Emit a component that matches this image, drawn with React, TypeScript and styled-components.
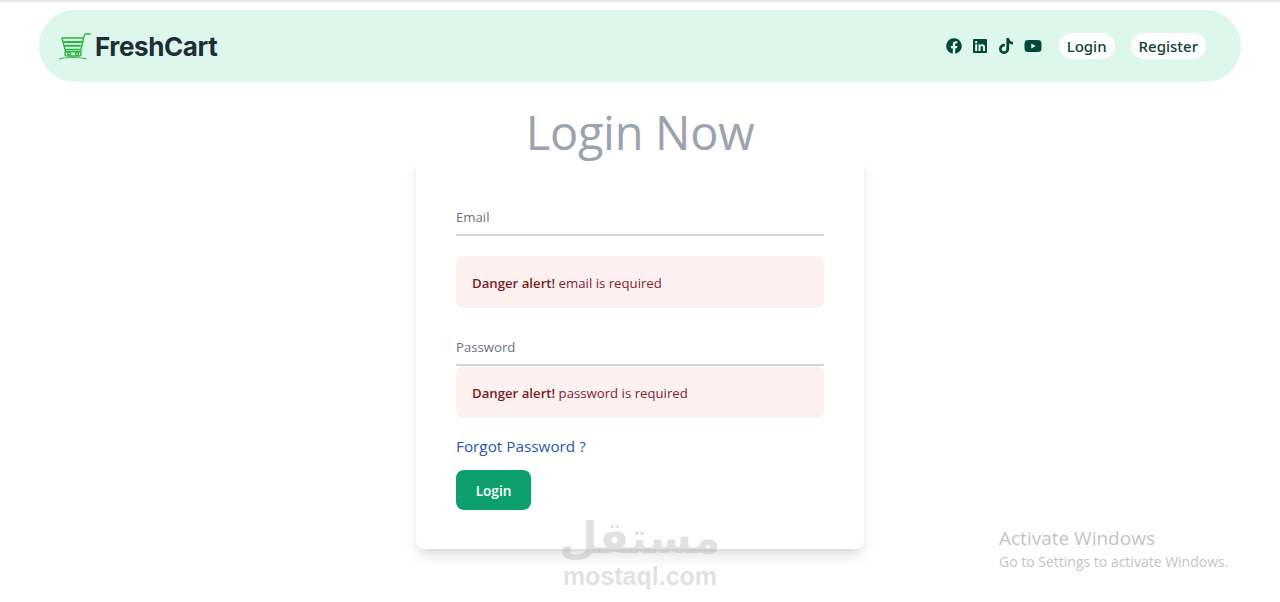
import React from 'react';
import styled, {createGlobalStyle} from 'styled-components';
import {FaFacebook, FaLinkedin, FaTiktok, FaYoutube} from 'react-icons/fa';

const GlobalStyle = createGlobalStyle`
  html, body {
    margin: 0;
    padding: 0;
    background: #fff;
    overflow: hidden;
  }
  body {
    font-family: "Open Sans", "Noto Sans", "Liberation Sans", sans-serif;
  }
`;

const CartLogo = () => (
  <svg width="32" height="27" viewBox="0 0 32 27" fill="none" stroke="#2fb344" strokeWidth="1.4" strokeLinecap="round" strokeLinejoin="round">
    <path d="M3 5h21.5l-3 13.5H6.5z" />
    <path d="M24.5 5 L26 1 H31" />
    <path d="M5 9h18.5" strokeWidth="2" />
    <path d="M6 12.8h15" strokeWidth="2" />
    <path d="M6.5 16.4h14" strokeWidth="1.4" />
    <rect x="6" y="18.5" width="16" height="4.5" rx="2.2" />
    <circle cx="10" cy="20.8" r="1.4" />
    <circle cx="18" cy="20.8" r="1.4" />
    <path d="M0.5 26 C6 24 21 24 27 26" strokeWidth="1.2" />
  </svg>
);

const App = () => {
  return (
    <>
      <GlobalStyle />
      <Page>
        <Navbar>
          <Brand>
            <CartLogo />
            <BrandName>FreshCart</BrandName>
          </Brand>
          <NavRight>
            <Socials>
              <FaFacebook size={16} />
              <FaLinkedin size={16} />
              <FaTiktok size={16} />
              <FaYoutube size={18} />
            </Socials>
            <NavLink>Login</NavLink>
            <NavLink>Register</NavLink>
          </NavRight>
        </Navbar>
        <Title>Login Now</Title>
        <Card>
          <Field>
            <FieldLabel>Email</FieldLabel>
          </Field>
          <Alert $gap={20}>
            <strong>Danger alert!</strong> email is required
          </Alert>
          <Field $top={29}>
            <FieldLabel>Password</FieldLabel>
          </Field>
          <Alert $gap={0}>
            <strong>Danger alert!</strong> password is required
          </Alert>
          <ForgotLink>Forgot Password ?</ForgotLink>
          <SubmitButton type="button">Login</SubmitButton>
        </Card>
        <Watermark>
          <WatermarkArabic>مستقل</WatermarkArabic>
          <WatermarkLatin>mostaql.com</WatermarkLatin>
        </Watermark>
        <ActivateNote>
          <ActivateTitle>Activate Windows</ActivateTitle>
          <ActivateText>Go to Settings to activate Windows.</ActivateText>
        </ActivateNote>
      </Page>
    </>
  );
};
export default App;

const Page = styled.div`
  position: relative;
  width: 1280px;
  height: 602px;
  box-sizing: border-box;
  border-top: 2px solid #e5e7eb;
  padding-top: 8px;
  overflow: hidden;
`;

const Navbar = styled.nav`
  display: flex;
  align-items: center;
  justify-content: space-between;
  box-sizing: border-box;
  width: 1202px;
  height: 72px;
  margin: 0 auto 0 39px;
  padding: 0 35px 0 20px;
  background: #def7ec;
  border-radius: 36px;
`;

const Brand = styled.div`
  display: flex;
  align-items: center;
  gap: 4px;
`;

const BrandName = styled.span`
  font-family: Inter, "Liberation Sans", sans-serif;
  font-size: 26px;
  font-weight: 700;
  letter-spacing: -0.4px;
  color: #1f2d36;
`;

const NavRight = styled.div`
  display: flex;
  align-items: center;
  gap: 16px;
`;

const Socials = styled.div`
  display: flex;
  align-items: center;
  gap: 10px;
  margin-right: 1px;
  color: #014737;
`;

const NavLink = styled.a`
  display: block;
  padding: 0 8px;
  height: 26px;
  line-height: 27px;
  background: #fff;
  border-radius: 13px;
  font-family: "Noto Sans", "Open Sans", sans-serif;
  font-size: 15px;
  font-weight: 500;
  color: #123f3a;
`;

const Title = styled.h1`
  margin: 27px 0 0;
  height: 47px;
  line-height: 47px;
  text-align: center;
  font-family: "Open Sans", "Noto Sans", sans-serif;
  font-size: 47px;
  font-weight: 400;
  letter-spacing: -0.3px;
  color: #9ca3af;
`;

const Card = styled.div`
  box-sizing: border-box;
  width: 448px;
  height: 393px;
  margin: 0 auto;
  padding: 51px 40px 40px;
  background: #fff;
  border-radius: 8px;
  box-shadow: 0 10px 15px -3px rgba(0, 0, 0, 0.1), 0 4px 6px -2px rgba(0, 0, 0, 0.07);
`;

const Field = styled.div<{$top?: number}>`
  height: 27px;
  margin-top: ${({$top}) => $top ?? 0}px;
  border-bottom: 2px solid #d1d5db;
`;

const FieldLabel = styled.label`
  display: block;
  font-size: 13.2px;
  line-height: 20px;
  color: #6b7280;
`;

const Alert = styled.div<{$gap: number}>`
  box-sizing: border-box;
  height: 52px;
  margin-top: ${({$gap}) => $gap}px;
  padding: 1px 16px 0;
  display: flex;
  align-items: center;
  white-space: pre;
  font-size: 13.2px;
  color: #80222f;
  background: #fdf0f1;
  border-radius: 8px;

  strong {
    font-weight: 600;
    color: #771d1d;
  }
`;

const ForgotLink = styled.a`
  display: block;
  margin-top: 17px;
  line-height: 22px;
  font-size: 15.3px;
  color: #2a56b5;
`;

const SubmitButton = styled.button`
  display: block;
  width: 75px;
  height: 40px;
  margin-top: 13px;
  padding: 0;
  border: 0;
  border-radius: 8px;
  background: #0e9f6e;
  color: #fff;
  font-family: inherit;
  font-size: 13.6px;
  font-weight: 600;
`;

const Watermark = styled.div`
  position: absolute;
  left: 562px;
  top: 510px;
  width: 156px;
  display: flex;
  flex-direction: column;
  align-items: center;
  color: rgba(170, 170, 175, 0.35);
`;

const WatermarkArabic = styled.span`
  font-family: "DejaVu Sans", sans-serif;
  font-size: 44px;
  font-weight: 700;
  line-height: 52px;
`;

const WatermarkLatin = styled.span`
  font-family: "Liberation Sans", sans-serif;
  font-size: 25px;
  font-weight: 700;
  line-height: 24px;
`;

const ActivateNote = styled.div`
  position: absolute;
  left: 999px;
  top: 524px;
  color: #c4c4c6;
`;

const ActivateTitle = styled.div`
  font-size: 19px;
  line-height: 24px;
  font-weight: 400;
`;

const ActivateText = styled.div`
  font-size: 14px;
  line-height: 23px;
`;
